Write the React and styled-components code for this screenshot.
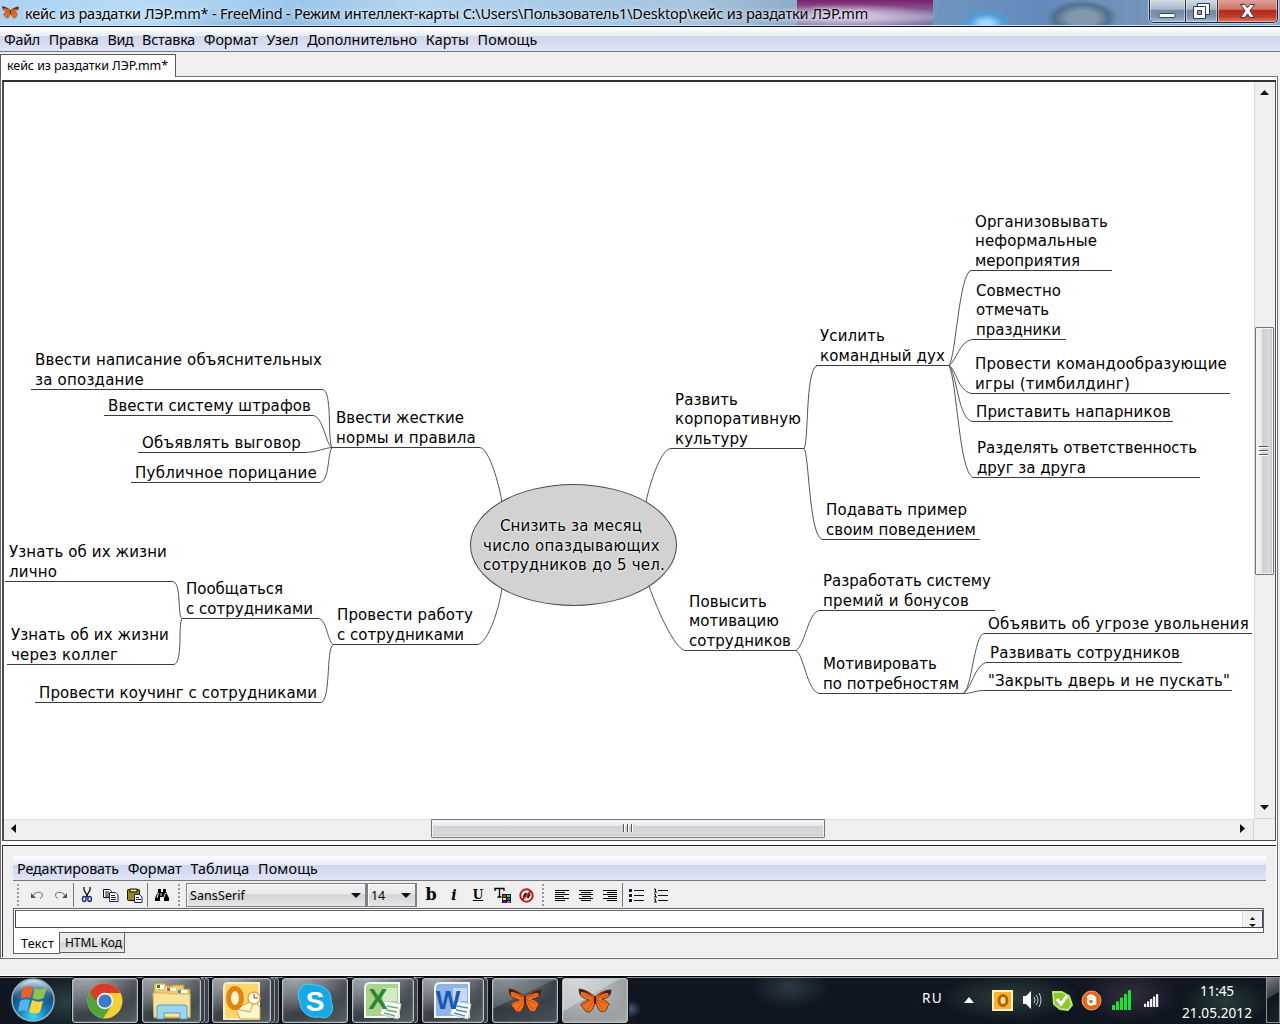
import React, { useLayoutEffect, useRef, useState } from "react";
import styled, { createGlobalStyle, css } from "styled-components";

const GlobalStyle = createGlobalStyle`
  * { box-sizing: border-box; }
  body { margin: 0; background: #efefef; overflow: hidden; }
  svg { display: block; flex: none; overflow: visible; }
`;

const Label = styled.span`
  display: block;
  flex: none;
  white-space: pre;
  width: ${(p) => p.$w}px;
`;

/* Spaces the letters so that the label fills its given width. */
function FitText({ w, children }) {
  const ref = useRef(null);
  const [spacing, setSpacing] = useState(0);
  useLayoutEffect(() => {
    const range = document.createRange();
    range.selectNodeContents(ref.current);
    setSpacing((w - range.getBoundingClientRect().width) / children.length);
  }, [w, children]);
  return (
    <Label ref={ref} $w={w} style={{ letterSpacing: `${spacing}px` }}>
      {children}
    </Label>
  );
}

const Window = styled.div`
  width: 1280px;
  height: 1024px;
  display: flex;
  flex-direction: column;
  font-family: "Noto Sans", "Open Sans", sans-serif;
  color: #000;
  overflow: hidden;
`;

const TitleBar = styled.header`
  height: 27px;
  flex: none;
  display: flex;
  align-items: flex-start;
  padding: 0 2px 0 2px;
  border-bottom: 1px solid #0a1026;
  box-shadow: inset 0 -1px #c8e2f5;
  font-size: 14.5px;
  line-height: 27px;
  background:
    radial-gradient(ellipse 28px 16px at 986px 24px, #9bd9ff 20%, rgba(75,160,225,.8) 60%, transparent),
    radial-gradient(ellipse 36px 18px at 1082px 18px, #8199ad 40%, rgba(72,98,125,.7) 75%, transparent),
    radial-gradient(ellipse 90px 12px at 850px 16px, rgba(214,205,228,.75) 30%, transparent),
    linear-gradient(180deg, rgba(122,26,102,.95), rgba(135,66,136,.75) 35%, rgba(170,145,190,.6) 65%, rgba(130,70,125,.6)) 797px 0 / 136px 27px no-repeat,
    radial-gradient(ellipse 90px 20px at 250px 26px, rgba(110,160,205,.45), transparent),
    linear-gradient(90deg, #abd2f2 0, #b6daf7 140px, #9bc6eb 300px, #b5d6f0 420px, #a6cbe9 560px, #a7c4dd 700px, #8eacc9 790px, #a9a7c4 870px, #6d94bd 940px, #638abb 1040px, #7393b8 1130px, #86a9cd 1280px);
`;

const TitleIcon = styled.div`
  width: 23px;
  padding-top: 5px;
`;

const TitleText = styled.div`
  flex: 1;
  text-shadow: 0 0 5px rgba(255,255,255,.9), 0 0 2px rgba(255,255,255,.5);
`;

const Controls = styled.div`
  display: flex;
  height: 23px;
  width: 129px;
  margin-right: 0;
  border: 1px solid #1d2638;
  border-top: 0;
  border-radius: 0 0 5px 5px;
  box-shadow: 0 0 0 1px rgba(225,240,255,.6);
  overflow: hidden;
`;

const Control = styled.div`
  width: ${(p) => p.$w}px;
  display: flex;
  align-items: center;
  justify-content: center;
  border-right: ${(p) => (p.$close ? 0 : "1px solid #26324a")};
  box-shadow: inset 1px 0 rgba(255,255,255,.4), inset -1px -1px rgba(255,255,255,.4);
  background: ${(p) =>
    p.$close
      ? "linear-gradient(#dca197, #cf7468 42%, #b6281b 48%, #bd3e28 75%, #dd7c62)"
      : "linear-gradient(#d0dae5, #a9b9ca 42%, #7189a3 48%, #7d96af 75%, #a5bdd3)"};
`;

const menuFill = css`
  background: linear-gradient(#fff, #e8ebf5 9px, #cfd6eb 9px, #e0e5f8);
`;

const MenuBar = styled.nav`
  height: 25px;
  flex: none;
  display: flex;
  gap: 8.7px;
  padding-left: 4px;
  font-size: 14.3px;
  line-height: 25px;
  border-bottom: 1px solid #747783;
  ${menuFill}
`;

const TabStrip = styled.div`
  height: 25px;
  flex: none;
  display: flex;
  padding-top: 2px;
  background: linear-gradient(#747783, #747783) 175px 24px / 1103px 1px no-repeat, #efefef;
`;

const FileTab = styled.div`
  width: 176px;
  padding-left: 6px;
  background: #fff;
  border: 1px solid #555762;
  border-width: 1px 1px 0 1px;
  font-size: 12.5px;
  line-height: 22px;
`;

const Workspace = styled.main`
  height: 882px;
  width: 1278px;
  flex: none;
  display: flex;
  flex-direction: column;
  gap: 4px;
  padding: 3px 1px 1px 1px;
  background: #fff;
  border: 1px solid #6b6c76;
  border-top: 0;
`;

const MapFrame = styled.section`
  height: 761px;
  flex: none;
  display: grid;
  grid-template-columns: 1250px 21px;
  grid-template-rows: 737px 21px;
  border: 1px solid #4a4b53;
  border-top: 2px solid #303036;
  background: #efefef;
  border-left-width: 2px;
`;

const Canvas = styled.div`
  position: relative;
  overflow: hidden;
  background: #fff;
  font-family: "DejaVu Sans", sans-serif;
  font-size: 15px;
  line-height: 19.6px;
`;

const Links = styled.svg`
  position: absolute;
  left: 0;
  top: 0;
`;

const Node = styled.div`
  position: absolute;
  left: ${(p) => p.$x - 4}px;
  top: ${(p) => p.$y - 82 - p.$n * 19.6}px;
  width: ${(p) => p.$w}px;
  height: ${(p) => p.$n * 19.6 + 1}px;
  padding: 1.6px 0 0 4px;
  border-bottom: 1px solid #3c3c3c;
`;

const RootNode = styled.div`
  position: absolute;
  left: 466px;
  top: 402px;
  width: 207px;
  height: 122px;
  padding: 32px 0 0 12px;
  border-radius: 50%;
  border: 1px solid #4c4c4c;
  background: #d2d2d2;
  text-shadow: 0 0 2px #fff, 0 0 3px #f4f4f4;
`;

const RootFirst = styled.div`
  padding-left: 17px;
`;

const VBar = styled.div`
  display: flex;
  flex-direction: column;
  align-items: center;
  justify-content: space-between;
  padding: 8px 2px 8px 0;
  border-left: 1px solid #dcdcdc;
  border-bottom: 1px solid #d5d5d5;
`;

const HBar = styled.div`
  display: flex;
  align-items: center;
  justify-content: space-between;
  padding: 0 8px 3px 7px;
  border-top: 1px solid #dcdcdc;
  border-right: 1px solid #d5d5d5;
`;

const Thumb = styled.div`
  display: flex;
  align-items: center;
  justify-content: center;
  border: 1px solid #74747a;
  border-radius: 1px;
  box-shadow: inset 0 0 0 1px #f2f2f4;
  width: ${(p) => (p.$vertical ? 19 : 394)}px;
  height: ${(p) => (p.$vertical ? 248 : 19)}px;
  flex: none;
  margin-top: ${(p) => (p.$vertical ? 1 : 0)}px;
  margin-left: ${(p) => (p.$vertical ? 0 : 0)}px;
  background: linear-gradient(${(p) => (p.$vertical ? "90deg" : "180deg")}, #f5f5f6 0, #e9e9eb 35%, #cfd0d5 38%, #dadadd 80%, #b9babf);
`;

const EditorFrame = styled.section`
  height: 112px;
  flex: none;
  padding: 10px 9px 0 10px;
  border-top: 1px solid #222228;
  border-left: 1px solid #33333a;
  background: #efefef;
  display: flex;
  flex-direction: column;
`;

const EditorMenu = styled(MenuBar)`
  padding-left: 4px;
  width: 1253px;
`;

const Toolbar = styled.div`
  height: 27px;
  flex: none;
  display: flex;
  align-items: center;
  padding: 2px 0 1px 4px;
  font-size: 12.5px;
`;

const Grip = styled.div`
  width: 2px;
  height: 23px;
  margin: 0 ${(p) => p.$r}px 0 ${(p) => p.$l || 0}px;
  background: repeating-linear-gradient(#9a9a9a 0 2px, transparent 2px 4px);
`;

const Divider = styled.div`
  width: 1px;
  height: 24px;
  background: #77777c;
`;

const Tool = styled.div`
  width: ${(p) => p.$w || 24}px;
  height: 22px;
  display: flex;
  align-items: center;
  justify-content: center;
`;

const Letter = styled.span`
  font: ${(p) => p.$font};
  text-decoration: ${(p) => (p.$underline ? "underline" : "none")};
`;

const Select = styled.div`
  height: 24px;
  width: ${(p) => p.$w}px;
  display: flex;
  align-items: center;
  justify-content: space-between;
  padding: 0 4px 0 3px;
  border: 1px solid #808086;
  border-right-width: 2px;
  box-shadow: inset 1px 1px #fff;
  background: linear-gradient(#f2f2f2, #e9e9e9 45%, #d3d3d5 50%, #e6e6e6);
  margin-right: ${(p) => p.$gap || 0}px;
`;

const TextBox = styled.div`
  width: 1251px;
  height: 25px;
  flex: none;
  padding: 1px 0 4px 1px;
  background: #fff;
  border: 1px solid #60636e;
`;

const TextField = styled.div`
  height: 18px;
  display: flex;
  justify-content: flex-end;
  border: 1px solid #454854;
  border-top-color: #60636e;
  background: #fff;
`;

const Spinner = styled.div`
  width: 20px;
  display: flex;
  flex-direction: column;
  align-items: center;
  justify-content: flex-end;
  gap: 4px;
  background: #f1f1f1;
  border-left: 1px solid #ddd;
`;

const EditorTabs = styled.div`
  display: flex;
  align-items: flex-start;
  margin-top: -1px;
`;

const EditorTab = styled.div`
  width: ${(p) => (p.$active ? 47 : 66)}px;
  height: ${(p) => (p.$active ? 22 : 21)}px;
  padding-left: ${(p) => (p.$active ? 7 : 5)}px;
  margin-left: ${(p) => (p.$active ? 0 : -1)}px;
  font-size: ${(p) => (p.$active ? 12.5 : 12)}px;
  line-height: ${(p) => (p.$active ? 23 : 19)}px;
  border: 1px solid #5e616b;
  border-top-width: ${(p) => (p.$active ? 0 : 1)}px;
  background: ${(p) => (p.$active ? "#fff" : "linear-gradient(#ededed, #e3e3e3 50%, #cfcfd1 52%, #ececec)")};
`;

const Taskbar = styled.footer`
  height: 48px;
  margin-top: auto;
  flex: none;
  display: flex;
  align-items: flex-start;
  border-top: 1px solid #000;
  box-shadow: inset 0 1px #829093, 0 -1px #fff;
  color: #fff;
  background:
    radial-gradient(ellipse 60px 30px at 70px 25px, rgba(70,105,105,.5), transparent),
    radial-gradient(ellipse 10px 9px at 631px 32px, rgba(90,120,145,.7), transparent),
    radial-gradient(ellipse 40px 22px at 790px 10px, rgba(50,65,76,.8), transparent),
    radial-gradient(ellipse 70px 24px at 1010px 20px, rgba(62,90,84,.6), transparent),
    radial-gradient(ellipse 50px 28px at 1130px 18px, rgba(65,55,75,.7), transparent),
    radial-gradient(ellipse 45px 24px at 1225px 25px, rgba(50,85,70,.6), transparent),
    #0f1620;
`;

const Start = styled.div`
  width: 72px;
  padding: 1px 0 0 10px;
`;

const TaskSlot = styled.div`
  width: 70px;
  height: 47px;
  flex: none;
  display: flex;
  padding-top: 1px;
`;

const TaskButton = styled.div`
  width: ${(p) => (p.$stack === 2 ? 59 : p.$stack === 1 ? 62 : 66)}px;
  height: 45px;
  display: flex;
  align-items: center;
  justify-content: center;
  border: 1px solid #b9c0c5;
  border-radius: 3px;
  box-shadow: 0 0 0 1px #0b1118, inset 0 0 2px rgba(255,255,255,.5);
  background: ${(p) =>
    p.$active
      ? "radial-gradient(ellipse 60px 45px at 20% 0, #d5d8da, transparent), linear-gradient(150deg, #b8bbbd 40%, #8d9193 41%, #a3a7aa)"
      : p.$cool
        ? "radial-gradient(ellipse 55px 30px at 20% 0, #8b9297, transparent), linear-gradient(155deg, #555d64 40%, #30383f 41%, #47515a)"
        : "radial-gradient(ellipse 60px 34px at 20% 0, #a0a4a9, transparent), linear-gradient(150deg, #5f676c, #394046 55%, #55615f)"};
`;

const StackEdge = styled.div`
  width: 4px;
  height: 45px;
  border: 1px solid #8e959a;
  border-left: 0;
  border-radius: 0 3px 3px 0;
  background: #3a4048;
`;

const Tray = styled.div`
  flex: 1;
  display: flex;
  align-items: flex-start;
  justify-content: flex-end;
  font-size: 13.6px;
`;

const Lang = styled.div`
  padding-top: 12px;
  line-height: 18px;
  margin-right: 21px;
`;

const TrayIcon = styled.div`
  width: ${(p) => p.$w}px;
  height: 46px;
  display: flex;
  align-items: center;
`;

const Clock = styled.div`
  width: 90px;
  height: 46px;
  padding-top: 3px;
  display: flex;
  flex-direction: column;
  align-items: center;
  line-height: 22px;
`;

const ShowDesktop = styled.div`
  width: 14px;
  height: 46px;
  margin-left: 4px;
  border: 1px solid #8a9196;
  background: linear-gradient(150deg, #777d82, #3a4046 40%, #10161d 42%, #1c232b);
`;

const Butterfly = ({ w, h }) => (
  <svg width={w} height={h} viewBox="0 0 34 26">
    <path d="M17 9C12 4 6 1.500 1 1c0 5 2 8 5 9l5 2c-4 1-8 3-8 5 1 2 2 2 3 4 2 4 6 4 8 1 2-3 3-7 3-11 1 4 2 8 4 11 3 3 7 2 8-2 0-2 2-2 2-4-1-2-4-4-7-5l4-1c3-1 5-4 5-8C27 2 21 5 17 9z" fill="#f0701d" stroke="#5b2410" strokeWidth=".8" />
    <path d="M5 6l11 4M4 17l11-6M9 23l7-12M29 7l-11 3M29 16l-11-5M25 22l-7-11" stroke="#c04c0c" strokeWidth=".8" fill="none" />
    <path d="M1 1c0 3 1 5 2 7V4c4 0 8 2 12 5C11 4 6 1.500 1 1zM33 2c0 3-1 5-2 6l-1-3c-4 0-8 2-11 4 4-4 9-7 14-7z" fill="#47200f" />
    <path d="M17 8v8" stroke="#3a170b" strokeWidth="1.800" />
  </svg>
);

const Arrow = ({ dir, w = 9, h = 6 }) => {
  const d = { up: `M0 ${h}L${w / 2} 0L${w} ${h}Z`, down: `M0 0H${w}L${w / 2} ${h}Z`, left: `M${w} 0V${h}L0 ${h / 2}Z`, right: `M0 0V${h}L${w} ${h / 2}Z` }[dir];
  return <svg width={w} height={h}><path d={d} fill="#111" /></svg>;
};

const nodes = [
  [31, 322, 389, [["Ввести написание объяснительных", 287], ["за опоздание", 109]]],
  [104, 313, 415, [["Ввести систему штрафов", 203]]],
  [138, 305, 452, [["Объявлять выговор", 159]]],
  [131, 320, 482, [["Публичное порицание", 182]]],
  [332, 480, 447, [["Ввести жесткие", 128], ["нормы и правила", 140]]],
  [5, 172, 581, [["Узнать об их жизни", 158], ["лично", 48]]],
  [7, 174, 664, [["Узнать об их жизни", 158], ["через коллег", 107]]],
  [182, 318, 618, [["Пообщаться", 97], ["с сотрудниками", 127]]],
  [35, 321, 702, [["Провести коучинг с сотрудниками", 278]]],
  [333, 478, 644, [["Провести работу", 136], ["с сотрудниками", 127]]],
  [671, 804, 448, [["Развить", 63], ["корпоративную", 126], ["культуру", 73]]],
  [816, 949, 365, [["Усилить", 65], ["командный дух", 125]]],
  [971, 1112, 270, [["Организовывать", 133], ["неформальные", 122], ["мероприятия", 105]]],
  [972, 1066, 339, [["Совместно", 85], ["отмечать", 73], ["праздники", 85]]],
  [971, 1230, 393, [["Провести командообразующие", 252], ["игры (тимбилдинг)", 155]]],
  [972, 1173, 421, [["Приставить напарников", 195]]],
  [973, 1200, 477, [["Разделять ответственность", 220], ["друг за друга", 109]]],
  [822, 980, 539, [["Подавать пример", 141], ["своим поведением", 150]]],
  [685, 796, 650, [["Повысить", 78], ["мотивацию", 90], ["сотрудников", 102]]],
  [819, 995, 610, [["Разработать систему", 168], ["премий и бонусов", 146]]],
  [819, 963, 693, [["Мотивировать", 114], ["по потребностям", 136]]],
  [984, 1252, 633, [["Объявить об угрозе увольнения", 261]]],
  [986, 1182, 662, [["Развивать сотрудников", 190]]],
  [984, 1232, 690, [["\"Закрыть дверь и не пускать\"", 242]]],
];

const links = [
  "M322 389.5C333 389 327 440 332 447.5",
  "M313 415.5C323 416 326 445 332 447.5",
  "M305 452.5C318 452 324 448 332 447.5",
  "M320 482.5C330 480 327 455 332 447.5",
  "M480 447.5C490 450 499 485 502 502",
  "M172 581.5C182 581 177 615 182 618.5",
  "M174 664.5C183 663 178 624 182 618.5",
  "M318 618.5C327 619 327 640 333 644.5",
  "M321 702.5C331 699 326 650 333 644.5",
  "M478 644.5C488 642 499 610 502 588",
  "M671 448.5C661 449 650 482 646 502",
  "M804 448.5C809 441 805 371 817 365.5",
  "M804 448.5C809 453 809 535 822 539.5",
  "M949 365.5C956 356 959 274 971 270.5",
  "M949 365.5C957 360 959 342 972 339.5",
  "M949 365.5C957 370 957 390 971 393.5",
  "M949 365.5C957 374 958 418 972 421.5",
  "M949 365.5C957 381 959 472 973 477.5",
  "M649 586C657 609 674 648 685 650.5",
  "M796 650.5C805 645 808 613 819 610.5",
  "M796 650.5C804 655 807 691 819 693.5",
  "M963 693.5C972 690 974 635 984 633.5",
  "M963 693.5C971 690 975 665 986 662.5",
  "M963 693.5C971 694 976 690 984 690.5",
];

const menu = [["Файл", 36], ["Правка", 50], ["Вид", 26], ["Вставка", 53], ["Формат", 54], ["Узел", 32], ["Дополнительно", 110], ["Карты", 43], ["Помощь", 60]];
const editorMenu = [["Редактировать", 102], ["Формат", 54], ["Таблица", 59], ["Помощь", 60]];

const UndoIcon = ({ flip }) => (
  <svg width="14" height="10" viewBox="0 0 14 10" fill="none" stroke="#666">
    <g transform={flip ? "translate(14 0) scale(-1 1)" : undefined}>
      <path d="M3 5.500C5 2 11 1 12.300 4c.5 2-.5 3.500-2.300 4.500" /><path d="M1 3v5h5z" fill="#555" stroke="none" />
    </g>
  </svg>
);
const CutIcon = () => (
  <svg width="12" height="16" viewBox="0 0 12 16" fill="none">
    <path d="M3 0v3l4 7M9 0v3l-4 7" stroke="#111" strokeWidth="1.3" />
    <ellipse cx="3.2" cy="12" rx="1.8" ry="2.5" stroke="#222c72" strokeWidth="1.4" />
    <ellipse cx="8.6" cy="12" rx="1.8" ry="2.5" stroke="#222c72" strokeWidth="1.4" />
  </svg>
);
const CopyIcon = () => (
  <svg width="16" height="14" viewBox="0 0 16 14" fill="#fff">
    <path d="M.5 1.5h6l2 2v6h-8z" stroke="#111" /><path d="M2 4h4M2 6h5M2 8h4" stroke="#111" />
    <path d="M6.500 4.500h6l2.500 2.500v6.500h-8.500z" stroke="#20205c" /><path d="M8 7.500h4M8 9.500h5M8 11.500h5" stroke="#20205c" />
  </svg>
);
const PasteIcon = () => (
  <svg width="16" height="15" viewBox="0 0 16 15">
    <rect x=".5" y="1.500" width="12" height="11" rx="1" fill="#918b20" stroke="#111" />
    <path d="M3 1h7v3H3z" fill="#e8dc62" stroke="#111" /><path d="M7.500 6.500h5l2.500 2.500v5.500H7.500z" fill="#fff" stroke="#20205c" />
    <path d="M9 9.500h3M9 11.500h5" stroke="#20205c" />
  </svg>
);
const FindIcon = () => (
  <svg width="16" height="14" viewBox="0 0 16 14">
    <path d="M4 1h3v3h2V1h3v3l3 6v3h-5V9H6v4H1v-3l3-6z" fill="#000" />
    <path d="M4.500 5L3 10M11.500 5l-1.500 4M7 5v3" stroke="#fff" strokeWidth=".9" />
  </svg>
);
const ColorIcon = () => (
  <svg width="17" height="17" viewBox="0 0 17 17">
    <path d="M1 4V1.500h9V4M5.500 2v8M3.500 10h4" stroke="#000" strokeWidth="1.300" fill="none" />
    <rect x="8" y="7" width="9" height="9" fill="#111" />
    <path d="M9 8h3v2H9z" fill="#e22" /><path d="M13 8h3v2h-3z" fill="#2dd" /><path d="M9 11h3v2H9z" fill="#ee2" />
    <path d="M13 11h3v2h-3z" fill="#173" /><path d="M9 14h3v2H9z" fill="#22d" /><path d="M13 14h3v2h-3z" fill="#e2e" />
  </svg>
);
const BanIcon = () => (
  <svg width="15" height="15" viewBox="0 0 15 15" fill="none">
    <path d="M4.500 9l2.500-4M8.500 10l2.500-4" stroke="#111" strokeWidth="2" />
    <circle cx="7.500" cy="7.500" r="6.200" stroke="#b5211d" strokeWidth="2" /><path d="M12 3L3 12" stroke="#b5211d" strokeWidth="1.800" />
  </svg>
);
const rowWidths = [14, 10, 14, 9, 14, 10];
const AlignIcon = ({ side }) => (
  <svg width="14" height="13">
    {rowWidths.map((w, i) => (
      <rect key={i} x={side === "left" ? 0 : side === "right" ? 14 - w : Math.round((14 - w) / 2)} y={1 + i * 2} width={w} height="1" fill="#000" />
    ))}
  </svg>
);
const ListIcon = ({ numbered }) => (
  <svg width="15" height="15">
    {[1, 6, 11].map((y) => (
      <g key={y}>
        {numbered ? <path d={`M1 ${y}h1.500v3M1 ${y + 3}h3`} stroke="#111" fill="none" /> : <rect x="0" y={y} width="3" height="3" fill="#111642" />}
        <rect x="5" y={y + 1} width="10" height="1" fill="#111" />
      </g>
    ))}
  </svg>
);

const StartOrb = () => (
  <svg width="46" height="45" viewBox="0 0 46 45">
    <defs>
      <radialGradient id="orb" cx=".5" cy=".9" r=".9"><stop offset="0" stopColor="#35d8f4" /><stop offset=".4" stopColor="#1679b6" /><stop offset=".75" stopColor="#164574" /><stop offset="1" stopColor="#a7c5da" /></radialGradient>
      <linearGradient id="gloss" x2="0" y2="1"><stop stopColor="#e2eef5" stopOpacity=".8" /><stop offset="1" stopColor="#5d8bb0" stopOpacity=".05" /></linearGradient>
    </defs>
    <circle cx="23" cy="22" r="21" fill="url(#orb)" stroke="#8fb4c8" strokeWidth="1.500" />
    <path d="M4 20a19 18 0 0 1 38 0q-19 7-38 0z" fill="url(#gloss)" />
    <path d="M13 10q5-3 10-1l-2.500 11q-5-2-10 1z" fill="#ec5f2b" /><path d="M25 10q5 3 12-1l-3.500 11q-6 3-11 0z" fill="#8fc648" />
    <path d="M10 23q5-3 10-1l-3 11q-5-2-9 1z" fill="#55b2ee" /><path d="M22 22q6 3 11 1l-3 11q-6 3-11 0z" fill="#fdd43c" />
  </svg>
);
const ChromeIcon = () => (
  <svg width="36" height="36" viewBox="0 0 36 36">
    <circle cx="18" cy="18" r="17.500" fill="#f6d02e" />
    <path d="M2.800 9.300A17.500 17.500 0 0 0 16 35.400L25 22z" fill="#52a43a" />
    <path d="M3 9A17.500 17.500 0 0 1 33.500 10H18L11 22z" fill="#d93a2b" />
    <circle cx="18" cy="18" r="8.300" fill="#f4f4f4" /><circle cx="18" cy="18" r="6.600" fill="#3a7cc6" />
  </svg>
);
const FolderIcon = () => (
  <svg width="42" height="38" viewBox="0 0 42 38">
    <path d="M3 4V1h10l3 3h5V3h12v4h6v29H3z" fill="#e8c96c" stroke="#b08d38" />
    <path d="M5 3h8v4H5zM15 6h10v3H15zM27 8h9v3h-9z" fill="#fff" /><path d="M6 3h3v3H6z" fill="#258844" /><path d="M16 6h3v3h-3z" fill="#d44" /><path d="M27 8h3v3h-3z" fill="#289bd0" />
    <path d="M2 11h14l2 1h21v23H3z" fill="#f8e39a" stroke="#dab857" />
    <path d="M6 37V25q0-2 2-2h26q2 0 2 2v12h-7v-6H13v6z" fill="#9ed5ee" stroke="#4aa1cc" />
  </svg>
);
const Glyph = styled.text`
  font: bold ${(p) => p.$size}px "Liberation Sans", sans-serif;
  text-anchor: middle;
`;
const OutlookIcon = () => (
  <svg width="40" height="40" viewBox="0 0 40 40">
    <path d="M2 6q0-4 4-4h31v36H2z" fill="#fbd769" stroke="#f3edca" strokeWidth="2" />
    <path d="M14 28l17-9 7 7v12H18z" fill="#fff6d7" stroke="#dc9d25" /><path d="M14 28l14 3 4-11" fill="none" stroke="#dc9d25" />
    <ellipse cx="13" cy="17" rx="6.500" ry="9.500" fill="#fff5d0" stroke="#e4840c" strokeWidth="5" />
    <circle cx="32" cy="17" r="6" fill="#fffdf0" stroke="#e6a548" strokeWidth="1.500" /><path d="M32 13v4h4" stroke="#754f18" fill="none" />
  </svg>
);
const SkypeIcon = () => (
  <svg width="38" height="38" viewBox="0 0 38 38">
    <path d="M12 2q3 0 6 1c12 0 18 8 17 17 2 3 2 7 1 9-2 6-7 8-12 6C13 37 4 30 4 20 0 11 4 3 12 2z" fill="#16a9e8" stroke="#57cbf5" />
    <Glyph x="19" y="29" $size={28} fill="#fff">S</Glyph>
  </svg>
);
const OfficeIcon = ({ letter, color, pale }) => (
  <svg width="40" height="40" viewBox="0 0 40 40">
    <path d="M2 7q0-5 5-5h29v34H2z" fill={pale} stroke="#f0f6ef" strokeWidth="2" />
    <path d="M20 7h14v13H20z" fill="#fff" opacity=".5" />
    <path d="M22 20l16 3-3 15-18-5z" fill="#fff" stroke="#bdcac5" />
    <path d="M24 25l11 2M23 29l11 2M21 32l11 3" stroke={color} strokeWidth="1.300" opacity=".7" />
    <Glyph x="15" y="28" $size={letter === "W" ? 26 : 29} fill={color}>{letter}</Glyph>
  </svg>
);

const tasks = [
  { icon: <ChromeIcon /> },
  { icon: <FolderIcon />, stack: 2 },
  { icon: <OutlookIcon />, stack: 2 },
  { icon: <SkypeIcon /> },
  { icon: <OfficeIcon letter="X" color="#2f8435" pale="#a9d58a" />, stack: 1 },
  { icon: <OfficeIcon letter="W" color="#1955b3" pale="#8db5e9" />, stack: 1 },
  { icon: <Butterfly w={34} h={26} />, cool: true },
  { icon: <Butterfly w={34} h={26} />, active: true },
];

const TrayOutlook = () => (
  <svg width="21" height="21" viewBox="0 0 21 21"><rect x="1" y="1" width="19" height="19" fill="#f6b52b" stroke="#fff0bc" strokeWidth="2" /><ellipse cx="11" cy="10.500" rx="4" ry="5" fill="#fbe29a" stroke="#b46208" strokeWidth="3" /></svg>
);
const TraySound = () => (
  <svg width="20" height="20" viewBox="0 0 20 20"><path d="M1 6h3l5-5v18l-5-5H1z" fill="#fff" /><path d="M12 7q2 3 0 6M14 5q4 5 0 10M17 3q4 7 0 14" stroke="#ccd1d4" fill="none" /></svg>
);
const TraySkype = () => (
  <svg width="22" height="21" viewBox="0 0 22 21"><path d="M2 2h9l7 4 3 9-4 5-8-1-6-5z" fill="#89c929" stroke="#bfe47b" strokeWidth="2" strokeLinejoin="round" /><path d="M6 9l4 5 6-8" stroke="#fff" strokeWidth="3" fill="none" /></svg>
);
const TrayAgent = () => (
  <svg width="21" height="21" viewBox="0 0 21 21"><circle cx="10.500" cy="10.500" r="9.500" fill="#e8661a" stroke="#f3a465" /><path d="M6 8q4-5 8 0v7" fill="none" stroke="#fff" strokeWidth="2.500" /><circle cx="10" cy="11.500" r="3" fill="none" stroke="#fff" strokeWidth="2.300" /></svg>
);
const Bars = ({ w, h, color }) => (
  <svg width={w} height={h} viewBox="0 0 20 20" preserveAspectRatio="none">
    {[0, 1, 2, 3, 4].map((i) => <rect key={i} x={i * 4} y={15 - i * 3.700} width="3" height={5 + i * 3.700} fill={color} />)}
  </svg>
);

export default function App() {
  return (
    <Window>
      <GlobalStyle />
      <TitleBar>
        <TitleIcon><Butterfly w={17} h={15} /></TitleIcon>
        <TitleText><FitText w={843}>{"кейс из раздатки ЛЭР.mm* - FreeMind - Режим интеллект-карты C:\\Users\\Пользователь1\\Desktop\\кейс из раздатки ЛЭР.mm"}</FitText></TitleText>
        <Controls>
          <Control $w={36}><svg width="18" height="20"><rect x="1" y="12.500" width="16" height="4" rx="1" fill="#fff" stroke="#3a4658" /></svg></Control>
          <Control $w={33}><svg width="19" height="18" fill="#fff" stroke="#303b50"><path d="M5.500 1.500h12v11h-12z" /><path d="M1.500 4.500h12v12h-12z" /><path d="M5.500 8.500h4v4h-4z" fill="#8fa5bb" /></svg></Control>
          <Control $w={59} $close><svg width="17" height="16"><path d="M1.500 1.500h4.500l2.500 3.200 2.500-3.200h4.500l-4.500 6.300 4.500 6.700h-4.500l-2.500-3.600-2.500 3.600H1.500L6 7.800z" fill="#fff" stroke="#492f39" /></svg></Control>
        </Controls>
      </TitleBar>
      <MenuBar>{menu.map(([t, w]) => <FitText key={t} w={w}>{t}</FitText>)}</MenuBar>
      <TabStrip><FileTab><FitText w={161}>кейс из раздатки ЛЭР.mm*</FitText></FileTab></TabStrip>
      <Workspace>
        <MapFrame>
          <Canvas>
            <Links width="1251" height="738" viewBox="4 82 1251 738" fill="none" stroke="#555">
              {links.map((d) => <path key={d} d={d} />)}
            </Links>
            {nodes.map(([x1, x2, y, lines]) => (
              <Node key={`${x1}-${y}`} $x={x1} $y={y} $w={x2 - x1} $n={lines.length}>
                {lines.map(([t, w]) => <FitText key={t} w={w}>{t}</FitText>)}
              </Node>
            ))}
            <RootNode>
              <RootFirst><FitText w={142}>Снизить за месяц</FitText></RootFirst>
              <FitText w={177}>число опаздывающих</FitText>
              <FitText w={182}>сотрудников до 5 чел.</FitText>
            </RootNode>
          </Canvas>
          <VBar>
            <Arrow dir="up" w={9} h={5} />
            <Thumb $vertical><svg width="10" height="10"><path d="M0 .5h9M0 4.500h9M0 8.500h9" stroke="#555" /><path d="M0 1.500h9M0 5.500h9M0 9.500h9" stroke="#fff" /></svg></Thumb>
            <Arrow dir="down" w={9} h={5} />
          </VBar>
          <HBar>
            <Arrow dir="left" w={5} h={9} />
            <Thumb><svg width="10" height="9"><path d="M.5 0v8M4.500 0v8M8.500 0v8" stroke="#555" /><path d="M1.500 0v8M5.500 0v8M9.500 0v8" stroke="#fff" /></svg></Thumb>
            <Arrow dir="right" w={5} h={9} />
          </HBar>
        </MapFrame>
        <EditorFrame>
          <EditorMenu>{editorMenu.map(([t, w]) => <FitText key={t} w={w}>{t}</FitText>)}</EditorMenu>
          <Toolbar>
            <Grip $r={6} />
            <Tool><UndoIcon /></Tool><Tool><UndoIcon flip /></Tool><Divider />
            <Tool $w={25}><CutIcon /></Tool><Tool><CopyIcon /></Tool><Tool><PasteIcon /></Tool><Divider />
            <Tool $w={28}><FindIcon /></Tool><Grip $l={2} $r={6} />
            <Select $w={181}><FitText w={55}>SansSerif</FitText><Arrow dir="down" w={10} h={5} /></Select>
            <Select $w={50} $gap={3}><FitText w={14}>14</FitText><Arrow dir="down" w={10} h={5} /></Select>
            <Tool $w={22}><Letter $font='bold 16px/20px "DejaVu Serif", serif'>b</Letter></Tool>
            <Tool><Letter $font='italic bold 14px/20px "DejaVu Serif", serif'>i</Letter></Tool>
            <Tool><Letter $underline $font='bold 12px/20px "DejaVu Serif", serif'>U</Letter></Tool>
            <Tool $w={25}><ColorIcon /></Tool><Tool $w={22}><BanIcon /></Tool>
            <Grip $l={5} $r={6} />
            <Tool><AlignIcon side="left" /></Tool><Tool><AlignIcon side="center" /></Tool><Tool><AlignIcon side="right" /></Tool>
            <Divider />
            <Tool $w={26}><ListIcon /></Tool><Tool $w={22}><ListIcon numbered /></Tool>
          </Toolbar>
          <TextBox><TextField><Spinner><Arrow dir="up" w={5} h={3} /><Arrow dir="down" w={7} h={3} /></Spinner></TextField></TextBox>
          <EditorTabs>
            <EditorTab $active><FitText w={33}>Текст</FitText></EditorTab>
            <EditorTab><FitText w={57}>HTML Код</FitText></EditorTab>
          </EditorTabs>
        </EditorFrame>
      </Workspace>
      <Taskbar>
        <Start><StartOrb /></Start>
        {tasks.map(({ icon, stack, active, cool }, i) => (
          <TaskSlot key={i}>
            <TaskButton $stack={stack} $active={active} $cool={cool}>{icon}</TaskButton>
            {stack >= 1 && <StackEdge />}
            {stack >= 2 && <StackEdge />}
          </TaskSlot>
        ))}
        <Tray>
          <Lang><FitText w={21}>RU</FitText></Lang>
          <TrayIcon $w={28}><svg width="10" height="6"><path d="M0 6L5 0L10 6Z" fill="#fff" /></svg></TrayIcon>
          <TrayIcon $w={30}><TrayOutlook /></TrayIcon>
          <TrayIcon $w={29}><TraySound /></TrayIcon>
          <TrayIcon $w={30}><TraySkype /></TrayIcon>
          <TrayIcon $w={31}><TrayAgent /></TrayIcon>
          <TrayIcon $w={32}><Bars w={20} h={20} color="#13e82c" /></TrayIcon>
          <TrayIcon $w={28}><Bars w={15} h={13} color="#f0f0f0" /></TrayIcon>
          <Clock><FitText w={34}>11:45</FitText><FitText w={70}>21.05.2012</FitText></Clock>
          <ShowDesktop />
        </Tray>
      </Taskbar>
    </Window>
  );
}
